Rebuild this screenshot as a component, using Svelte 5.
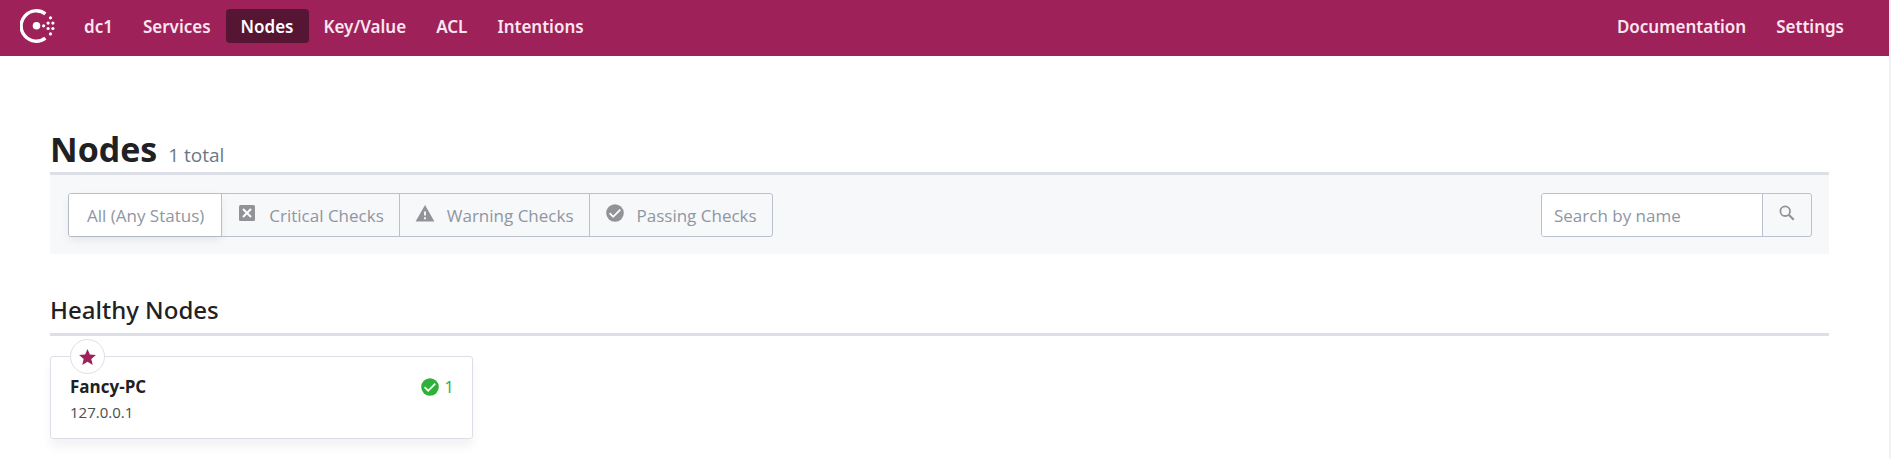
<script>
  const sections = ['Services', 'Nodes', 'Key/Value', 'ACL', 'Intentions'];
  const current = 'Nodes';

  const filters = [
    { value: '', label: 'All (Any Status)' },
    { value: 'critical', label: 'Critical Checks' },
    { value: 'warning', label: 'Warning Checks' },
    { value: 'passing', label: 'Passing Checks' },
  ];
  const nodes = [{ name: 'Fancy-PC', address: '127.0.0.1', passing: 1, leader: true }];

  let status = $state('');
  let term = $state('');
  let shown = $derived(nodes.filter((n) => n.name.toLowerCase().includes(term.toLowerCase())));
</script>

{#snippet check()}
  <svg class="icon" viewBox="0 0 18 18" aria-hidden="true">
    <circle cx="9" cy="9" r="8.8" fill="currentColor" />
    <path d="M3.6 9.2 7.2 12.8 14.3 5.7" fill="none" stroke="#fff" stroke-width="1.8" />
  </svg>
{/snippet}

<div class="page">
  <header>
    <a class="logo" href="#home" aria-label="Consul">
      <svg viewBox="0 0 35 34" fill="#fff" aria-hidden="true">
        <path d="M25.4 4.8A15.2 15.2 0 1 0 25.4 29.2" fill="none" stroke="#fff" stroke-width="3.4" />
        <circle cx="16.5" cy="16.8" r="3.8" />
        <circle cx="23.6" cy="16.8" r="1.6" />
        <circle cx="28.1" cy="14.1" r="1.6" />
        <circle cx="28.1" cy="19.5" r="1.6" />
        <circle cx="32.9" cy="14.1" r="1.6" />
        <circle cx="32.9" cy="19.5" r="1.6" />
        <circle cx="30.5" cy="8.8" r="1.6" />
        <circle cx="30.5" cy="24.9" r="1.6" />
      </svg>
    </a>
    <nav aria-label="Sections">
      <a href="#dc1">dc1</a>
      {#each sections as name}
        <a href="#{name}" class:active={name === current}>{name}</a>
      {/each}
    </nav>
    <nav class="side" aria-label="Help">
      <a href="#docs">Documentation</a>
      <a href="#settings">Settings</a>
    </nav>
  </header>

  <main>
    <h1>Nodes <em>1 total</em></h1>
    <form class="bar" onsubmit={(e) => e.preventDefault()}>
      <div class="group" role="radiogroup" aria-label="Status">
        {#each filters as f}
          <label class:selected={status === f.value} class:plain={!f.value}>
            <input type="radio" name="status" value={f.value} bind:group={status} />
            {#if f.value === 'critical'}
              <svg class="icon" viewBox="0 0 18 18" aria-hidden="true">
                <rect x="1" y="1" width="16" height="16" rx="1.5" fill="#919396" />
                <path d="M5 5 13 13M13 5 5 13" stroke="#fff" stroke-width="2" />
              </svg>
            {:else if f.value === 'warning'}
              <svg class="icon" viewBox="0 0 18 18" aria-hidden="true">
                <path d="M9 1 18.4 17.4H-.4Z" fill="#919396" />
                <path d="M9 7.6v4M9 13.2v2" stroke="#fff" stroke-width="1.8" />
              </svg>
            {:else if f.value === 'passing'}
              {@render check()}
            {/if}
            <span>{f.label}</span>
          </label>
        {/each}
      </div>
      <div class="search">
        <input type="search" aria-label="Search by name" placeholder="Search by name" bind:value={term} />
        <button aria-label="Search">
          <svg viewBox="0 0 16 16" fill="none" stroke="#919396" aria-hidden="true">
            <circle cx="6.2" cy="6.2" r="4.8" stroke-width="1.8" />
            <path d="M9.7 9.7 14.7 14.7" stroke-width="2.2" />
          </svg>
        </button>
      </div>
    </form>

    <section>
      <h2>Healthy Nodes</h2>
      <ul>
        {#each shown as node}
          <li>
            {#if node.leader}
              <span class="leader">
                <svg viewBox="2 2 20 19" role="img" aria-label="Leader">
                  <path
                    fill="#9e2159"
                    d="M12 17.27 18.18 21l-1.64-7.03L22 9.24l-7.19-.61L12 2 9.19 8.63 2 9.24l5.46 4.73L5.82 21z"
                  />
                </svg>
              </span>
            {/if}
            <a href="#{node.name}">
              <strong>{node.name}</strong>
              <span class="address">{node.address}</span>
            </a>
            <span class="passing">{@render check()}{node.passing}</span>
          </li>
        {/each}
      </ul>
    </section>
  </main>
</div>

<style>
  :global(body) {
    margin: 0;
    background: #fff;
  }
  .page {
    box-sizing: border-box;
    min-height: 100vh;
    border-right: 2px solid #f1f1f1;
    font-family: 'Open Sans', 'Noto Sans', sans-serif;
    font-size: 17px;
    color: #1f2124;
  }
  a {
    color: inherit;
    text-decoration: none;
  }
  header {
    display: flex;
    align-items: center;
    box-sizing: border-box;
    height: 56px;
    padding: 0 30px 4px 20px;
    background: #9e2159;
    color: #fbe5ef;
  }
  .logo {
    display: flex;
    margin-right: 14px;
  }
  .logo svg {
    width: 35px;
    height: 34px;
  }
  nav {
    display: flex;
    font-family: 'Noto Sans', 'Open Sans', sans-serif;
    font-weight: 600;
  }
  nav a {
    padding: 1px 15px 0;
    border-radius: 4px;
    line-height: 33px;
  }
  nav a.active {
    background: #561532;
    color: #fff;
  }
  .side {
    margin-left: auto;
  }
  main {
    padding: 70px 60px 18px 50px;
  }
  h1 {
    display: flex;
    align-items: baseline;
    gap: 11px;
    margin: 0;
    border-bottom: 3px solid #dce0e6;
    font-size: 34px;
    line-height: 46px;
    font-weight: 700;
  }
  h1 em {
    font-size: 19px;
    line-height: 20px;
    font-style: normal;
    font-weight: 400;
    color: #6a7786;
  }
  .bar {
    display: flex;
    justify-content: space-between;
    padding: 18px 17px 17px 18px;
    background: #f7f8fa;
    color: #8e96a3;
  }
  .group,
  .search {
    display: flex;
    box-sizing: border-box;
    height: 44px;
    border: 1px solid #bac1cc;
    border-radius: 3px;
  }
  .group label {
    display: flex;
    align-items: center;
    gap: 13px;
    padding: 0 15px 0 16px;
  }
  .group label.plain {
    padding: 0 17px 0 18px;
  }
  .group label + label {
    border-left: 1px solid #bac1cc;
  }
  .group label.selected {
    background: #fff;
    border-radius: 2px;
    box-shadow: 0 4px 8px rgba(99, 104, 115, 0.12);
  }
  .group input {
    position: absolute;
    opacity: 0;
    pointer-events: none;
  }
  .icon {
    width: 18px;
    height: 18px;
    overflow: visible;
  }
  .group .icon {
    margin-bottom: 4px;
    color: #919396;
  }
  .search input {
    box-sizing: border-box;
    width: 221px;
    padding: 0 12px;
    border: 0;
    border-right: 1px solid #bac1cc;
    border-radius: 2px 0 0 2px;
    background: #fff;
    color: inherit;
    font: inherit;
    outline-offset: 2px;
  }
  .search input::placeholder {
    color: #8e96a3;
    opacity: 1;
  }
  .search button {
    display: flex;
    align-items: center;
    justify-content: center;
    width: 48px;
    padding: 0 0 4px;
    border: 0;
    background: none;
  }
  .search svg {
    width: 16px;
    height: 16px;
  }
  section {
    margin-top: 38px;
  }
  h2 {
    margin: 0;
    padding-bottom: 5px;
    border-bottom: 3px solid #dce0e6;
    font-family: 'Noto Sans', 'Open Sans', sans-serif;
    font-size: 24px;
    line-height: 36px;
    font-weight: 500;
  }
  ul {
    display: grid;
    grid-template-columns: repeat(auto-fill, minmax(400px, 423px));
    gap: 20px;
    margin: 20px 0 0;
    padding: 0;
    list-style: none;
  }
  li {
    position: relative;
    display: flex;
    justify-content: space-between;
    align-items: flex-start;
    padding: 17px 18px 14px 19px;
    border: 1px solid #dce0e6;
    border-radius: 3px;
    box-shadow: 0 8px 10px rgba(0, 0, 0, 0.05);
  }
  .leader {
    position: absolute;
    top: -18px;
    left: 19px;
    display: flex;
    align-items: center;
    justify-content: center;
    box-sizing: border-box;
    width: 35px;
    height: 35px;
    border: 1px solid #dce0e6;
    border-radius: 50%;
    background: #fff;
  }
  .leader svg {
    width: 17px;
    height: 16px;
  }
  li strong,
  .address {
    display: block;
    line-height: 26px;
  }
  li strong {
    font-weight: 700;
  }
  .address {
    font-size: 15px;
    line-height: 24px;
    color: #4a4c50;
  }
  .passing {
    display: flex;
    align-items: center;
    gap: 5px;
    line-height: 26px;
    color: #2eb039;
  }
</style>
